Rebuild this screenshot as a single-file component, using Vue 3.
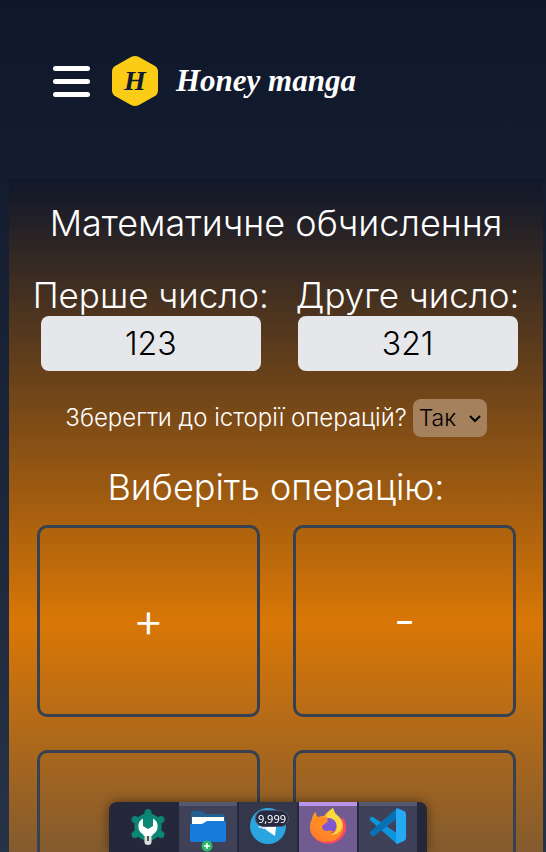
<script setup>
import { ref } from 'vue'

const first = ref('123')
const second = ref('321')
const save = ref('yes')
const operations = [
  { name: 'Додавання', sign: '+' },
  { name: 'Віднімання', sign: '-' },
  { name: 'Множення', sign: '' },
  { name: 'Ділення', sign: '' },
]
</script>

<template>
  <div class="page">
    <div class="scene">
      <header class="header">
        <button class="burger" type="button" aria-label="Меню">
          <span></span><span></span><span></span>
        </button>
        <a class="brand" href="#">
          <span class="badge">
            <svg viewBox="0 0 46 50" aria-hidden="true">
              <path d="M19 1.1Q23 -1.1 27 1.1L42.500 9.700Q46 11.700 46 15.500V34.500Q46 38.300 42.500 40.300L27 48.900Q23 51.100 19 48.900L3.500 40.300Q0 38.300 0 34.500V15.500Q0 11.700 3.500 9.700Z" fill="#facc15" />
            </svg>
            <span class="initial">H</span>
          </span>
          <span class="name">Honey manga</span>
        </a>
      </header>

      <main class="panel">
        <h1 class="title">Математичне обчислення</h1>
        <div class="numbers">
          <div class="field">
            <label for="first">Перше число:</label>
            <input id="first" v-model="first" type="text" inputmode="numeric" />
          </div>
          <div class="field">
            <label for="second">Друге число:</label>
            <input id="second" v-model="second" type="text" inputmode="numeric" />
          </div>
        </div>
        <div class="history">
          <label for="save">Зберегти до історії операцій?</label>
          <span class="choice">
            <select id="save" v-model="save">
              <option value="yes">Так</option>
              <option value="no">Ні</option>
            </select>
            <svg viewBox="0 0 12 8" aria-hidden="true">
              <path d="M1.500 1.500L6 6L10.500 1.500" fill="none" stroke="#000" stroke-width="2" stroke-linecap="round" />
            </svg>
          </span>
        </div>
        <h2 class="title">Виберіть операцію:</h2>
        <div class="operations">
          <button v-for="op in operations" :key="op.name" type="button" :aria-label="op.name">{{ op.sign }}</button>
        </div>
      </main>
    </div>

    <nav class="dock">
      <button class="app" type="button" aria-label="Налаштування">
        <svg viewBox="0 0 36 36">
          <g fill="#0b8574">
            <path d="M18 4L30 11V25L18 32L6 25V11Z" stroke="#0b8574" stroke-width="3" stroke-linejoin="round" />
            <circle cx="18" cy="3.500" r="3.500" /><circle cx="18" cy="31" r="3.500" />
            <circle cx="5" cy="10.500" r="3.500" /><circle cx="31" cy="10.500" r="3.500" />
            <circle cx="5" cy="25.500" r="3.500" /><circle cx="31" cy="25.500" r="3.500" />
          </g>
          <path d="M13 9.500A9 9 0 0 0 13.500 25.500V27H22.500V25.500A9 9 0 0 0 23 9.500V17L18 20L13 17Z" fill="#fff" />
          <path d="M14.500 27H21.500V33Q21.500 36 18 36T14.500 33Z" fill="#dedede" />
          <path d="M18 27V32" stroke="#555" stroke-width="2" />
        </svg>
      </button>
      <button class="app open" type="button" aria-label="Файли">
        <svg viewBox="0 0 36 36">
          <path d="M1 5Q1 3 3 3H12L16 6H33Q35 6 35 8V16H1Z" fill="#24608f" />
          <path d="M2 9H34V20H2Z" fill="#fff" />
          <path d="M0 17Q0 16 2 16H12L17 13H34Q36 13 36 15V32Q36 34 34 34H2Q0 34 0 32Z" fill="#187bdc" />
        </svg>
        <span class="plus"><svg viewBox="0 0 12 12"><circle cx="6" cy="6" r="5.500" fill="#2ab866" /><path d="M6 3V9M3 6H9" stroke="#fff" stroke-width="1.500" /></svg></span>
      </button>
      <button class="app open quiet" type="button" aria-label="Повідомлення">
        <svg viewBox="0 0 36 36">
          <circle cx="18" cy="18" r="18" fill="#2ba5df" />
          <path d="M8 19L27 10L25 28L19 24L15 21Z" fill="#fff" />
          <path d="M8 19L25 12L15 21Z" fill="#d5e9f5" />
        </svg>
        <span class="count">9,999</span>
      </button>
      <button class="app open active" type="button" aria-label="Браузер">
        <svg viewBox="0 0 36 36">
          <defs>
            <linearGradient id="flame" x1="0.800" y1="0" x2="0.300" y2="1">
              <stop offset="0" stop-color="#ffe54a" /><stop offset="0.450" stop-color="#ff9422" /><stop offset="1" stop-color="#ff7a2b" />
            </linearGradient>
          </defs>
          <path d="M31 10L33 12L33 9Q37 16 36 21A18 17 0 0 1 1 24Z" fill="#ff4664" />
          <path d="M2 11Q2 7 6 4Q6 8 8 9Q11 8 14 8Q18 3 23 0Q24 5 28 8Q34 13 33 20A16.500 14 0 0 1 0 20Q0 14 2 11Z" fill="url(#flame)" />
          <path d="M23 0Q16 5 17 10Q26 11 27 18Q27 25 20 27Q29 27 32 20Q33 13 28 8Q24 5 23 0Z" fill="#ffd83d" />
          <circle cx="18.500" cy="18" r="8" fill="#8057cf" />
          <path d="M6 10Q13 8 17 10Q19 13 16 15L12 18Q12 23 17 23Q20 22 23 23Q19 29 12 25Q5 20 6 10Z" fill="#ff8b22" />
        </svg>
      </button>
      <button class="app open" type="button" aria-label="Редактор">
        <svg viewBox="0 0 36 36">
          <path d="M3 9Q1 8 0 10Q-1 12 1 13L27 36L28 26Z" fill="#0b95dc" />
          <path d="M27 0L28 10L4 28Q2 29 1 27L0 26Q-1 24 1 23Z" fill="#0871b5" />
          <path d="M27 0L34 3Q36 4 36 6V30Q36 32 34 33L27 36Q26 36 26 34V2Z" fill="#26a9f5" />
        </svg>
      </button>
    </nav>
  </div>
</template>

<style>
body {
  margin: 0;
  background: #0f172a;
}
</style>

<style scoped>
.page {
  height: 100vh;
  overflow: hidden;
  color: #fff;
  font-family: Inter, "Open Sans", sans-serif;
  font-weight: 300;
}
.scene {
  padding: 0 3px 240px 9px;
  background: linear-gradient(#0f172a, #334155);
}
button, input, select {
  margin: 0;
  padding: 0;
  border: 0;
  background: none;
  color: inherit;
  font: inherit;
}
.header {
  display: flex;
  align-items: center;
  gap: 22px;
  padding: 56px 44px 73px;
}
.burger {
  display: flex;
  flex-direction: column;
  gap: 8px;
  width: 37px;
}
.burger span {
  height: 5px;
  border-radius: 3px;
  background: #fff;
}
.brand {
  display: flex;
  align-items: center;
  gap: 18px;
  color: #fff;
  text-decoration: none;
  font-family: "Liberation Serif", serif;
  font-style: italic;
  font-weight: 700;
}
.badge {
  display: grid;
  place-items: center;
  width: 46px;
}
.badge svg, .initial {
  grid-area: 1 / 1;
}
.badge svg {
  display: block;
  width: 46px;
}
.initial {
  color: #111a2e;
  font-size: 28px;
  line-height: 30px;
}
.name {
  font-size: 31px;
  line-height: 44px;
}
.panel {
  display: flex;
  flex-direction: column;
  align-items: center;
  padding: 23px 0 125px;
  background: linear-gradient(#0f172a, #d97706, #334155);
}
.title {
  margin: 0;
  font-size: 36px;
  font-weight: 300;
  line-height: 42px;
}
.numbers {
  display: flex;
  justify-content: center;
  gap: 27px;
  margin-top: 30px;
}
.field {
  display: flex;
  flex-direction: column;
  align-items: center;
  font-size: 35px;
  line-height: 42px;
  white-space: nowrap;
}
.field input {
  width: 220px;
  height: 55px;
  border-radius: 8px;
  background: #e5e7eb;
  color: #000;
  font-size: 32px;
  text-align: center;
}
.history {
  display: flex;
  align-items: center;
  gap: 6px;
  margin: 28px 0 29px;
  font-size: 24px;
  line-height: 38px;
}
.choice {
  position: relative;
}
.choice select {
  display: block;
  width: 74px;
  height: 38px;
  padding: 0 6px;
  border-radius: 8px;
  background: #a5815d;
  color: #000;
  font-size: 23px;
  appearance: none;
}
.choice svg {
  position: absolute;
  top: 16px;
  right: 6px;
  width: 12px;
  pointer-events: none;
}
.operations {
  display: grid;
  grid-template-columns: 1fr 1fr;
  gap: 33px;
  align-self: stretch;
  margin: 17px 27px 0 28px;
}
.operations button {
  height: 192px;
  padding-bottom: 4px;
  border: 3px solid #374151;
  border-radius: 10px;
  font-size: 48px;
}
.dock {
  position: fixed;
  bottom: 0;
  left: 50%;
  display: flex;
  gap: 2px;
  margin-left: -5px;
  padding: 0 10px;
  border-radius: 8px 8px 0 0;
  background: #25273a;
  box-shadow: 0 0 12px #0007;
  transform: translateX(-50%);
}
.app {
  position: relative;
  display: grid;
  place-items: center;
  width: 58px;
  height: 50px;
}
.app > svg {
  width: 36px;
  height: 36px;
}
.open {
  border-top: 4px solid #555970;
  padding-bottom: 6px;
  background: #3f4158;
}
.quiet {
  border-top-color: #34364c;
  background: #34364c;
}
.active {
  border-top-color: #b793ea;
  background: #705c91;
}
.plus {
  position: absolute;
  bottom: 0;
  left: 22px;
  width: 12px;
  height: 12px;
}
.plus svg {
  display: block;
}
.count {
  position: absolute;
  top: 4px;
  right: 8px;
  padding: 0 2px;
  border: 1px solid #50536a;
  border-radius: 9px;
  background: #272940;
  font: 11px/15px "Noto Sans", sans-serif;
}
</style>
